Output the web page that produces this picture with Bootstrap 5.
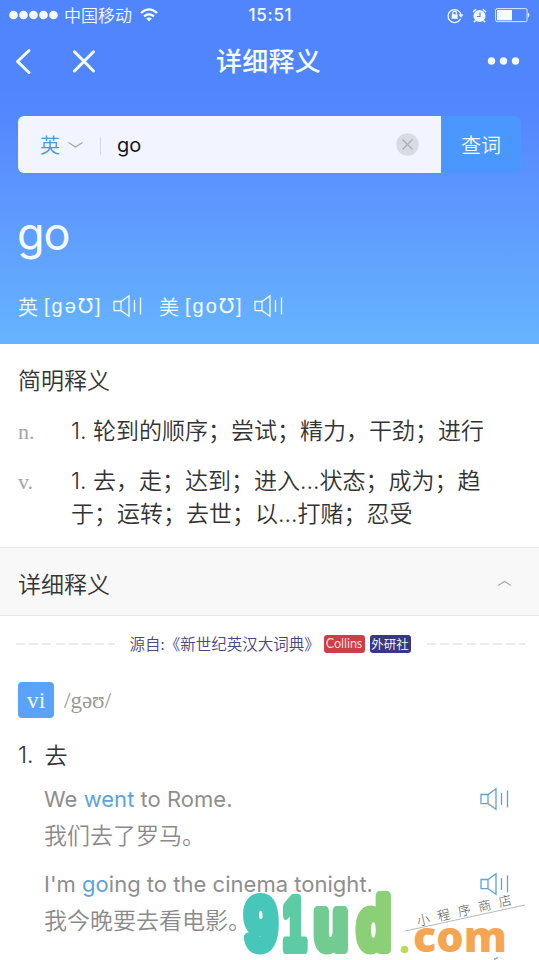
<!DOCTYPE html>
<html lang="zh-CN">
<head>
<meta charset="utf-8">
<meta name="viewport" content="width=device-width, initial-scale=1">
<title>详细释义</title>
<link href="https://cdn.jsdelivr.net/npm/bootstrap@5.3.0/dist/css/bootstrap.min.css" rel="stylesheet">
<style>
html,body{height:960px;overflow:hidden}
body{width:539px;position:relative;background:#fff;color:#333;font-family:Inter,"Noto Sans CJK SC",sans-serif;font-size:23px;line-height:33px;font-weight:350}
svg{display:block;flex:none;overflow:visible}
.cjk{font-family:"Noto Sans CJK SC",sans-serif}
.hero{height:344px;background:linear-gradient(#5185fe 0,#5185fe 90px,#5689ff 130px,#5e99ff 210px,#66b4ff 344px);color:#f5fcff}
.status-row{height:30px;padding:0 9px 0 9px;display:grid;grid-template-columns:1fr auto 1fr;align-items:center;font-size:17px;line-height:28px}
.carrier{margin:0 8px 0 6px}
.clock{font-size:17px;font-weight:500;letter-spacing:.7px;padding-left:2px}
.title-row{height:62px;padding:0 19px 0 15px;display:grid;grid-template-columns:1fr auto 1fr;align-items:center}
.page-title{font-size:26px;font-weight:500;line-height:60px;height:62px;letter-spacing:.3px;padding-left:2px}
.close-x{margin-left:42px}
.search-row{margin:24px 18px 0;height:57px;width:503px;border-radius:6px;background:#4a98ff;overflow:hidden}
.search-field{width:423px;background:#f2f5ff;padding:0 22px}
.lang{font-size:20px;color:#4a98d2;margin-right:8px}
.query{font-size:20px;font-weight:400;color:#15161a;line-height:30px}
.sep{width:1px;height:18px;background:#d5d8e8;margin:2px 16px 0 17px}
.lookup{font-size:20px;line-height:57px}
.headword{font-size:45px;font-weight:400;line-height:60px;margin:31px 0 0 17px;letter-spacing:-1px}
.phon{margin:22px 0 0 18px;height:40px;font-size:20px}
.ipa{font-family:"Liberation Sans","DejaVu Sans",sans-serif;letter-spacing:2px;font-weight:400;margin-left:6px;width:63px;margin-right:6px}
.us{margin-left:17px}
.heading{font-size:23px;line-height:34px}
.brief{height:203px;padding:18px 18px 0}
.sense-n{margin-top:19px}
.sense-v{margin-top:17px}
.pos{width:53px;flex:none;font-family:"Liberation Serif",serif;font-size:22px;color:#a5a5a5}
.detail-bar{height:69px;background:#f8f8f8;border-top:1px solid #eaeaea;border-bottom:1px solid #e7e7e7;padding:3px 28px 0 18px}
.source{height:56px;padding:0 14px 0 16px;font-size:15.5px;color:#484880}
.source-name{margin:0 0 1px 15px;width:194px}
.dash{height:2px;background:repeating-linear-gradient(90deg,#ebebeb 0 9px,transparent 9px 13.2px)}
.tag{height:18px;width:41px;border-radius:3px;color:#fff;font-size:12.5px;line-height:17px;text-align:center}
.collins{background:#cd3f47;font-family:Lato,sans-serif;font-weight:400;color:#ffdcdc}
.fltrp{background:#373784;margin-left:5px}
.vi{width:36px;height:36px;border-radius:4px;background:#5ba2fa;color:#e8fbff;font-family:"Liberation Serif",serif;font-size:24px;line-height:36px;text-align:center}
.ipa2{font-family:"Liberation Serif","DejaVu Serif",serif;color:#999;font-size:23px;margin-left:10px}
.word-row{padding:0 18px;margin-top:10px}
.sense{margin:21px 18px 0;height:33px}
.sense-text{margin-left:11px;padding-top:1px}
.example{padding:0 31px 0 44px;color:#8e8e8e;height:85px}
.first-example{margin-top:9px}
.en{font-size:22px;line-height:36px;font-weight:375;letter-spacing:.02px}
.zh{line-height:34px;font-size:23px;font-weight:350;color:#8a8a8a}
.hit{color:#5ba3dd}
.speak{margin-top:7px}
.watermark{position:absolute;left:225px;top:880px}
</style>
<script src="https://cdn.jsdelivr.net/npm/bootstrap@5.3.0/dist/js/bootstrap.bundle.min.js"></script>
</head>
<body>
<svg width="0" height="0" class="position-absolute"><defs><g id="speaker" fill="none" stroke="currentColor" stroke-width="1.3"><path d="M1 6.5H8L16 .8V21.2L8 15.7H1ZM8 6.5V15.7M21.5 5V17M27.5 2.5V19.5"/></g></defs></svg>
<header class="hero">
 <div class="status-row">
  <div class="d-flex align-items-center">
   <svg width="49" height="10" fill="currentColor"><circle cx="4.5" cy="5" r="4.3"/><circle cx="14.5" cy="5" r="4.3"/><circle cx="24.5" cy="5" r="4.3"/><circle cx="34.5" cy="5" r="4.3"/><circle cx="44.5" cy="5" r="4.3"/></svg>
   <span class="cjk carrier">中国移动</span>
   <svg width="18" height="14" fill="none" stroke="currentColor" stroke-width="2.3"><path d="M1 5Q9-2.2 17 5M4 8.4Q9 4 14 8.4"/><path d="M6.2 10.5Q9 8.3 11.8 10.5L9 13.5Z" fill="currentColor" stroke="none"/></svg>
  </div>
  <span class="clock">15:51</span>
  <div class="d-flex align-items-center justify-content-end">
   <svg width="17" height="15" fill="none" stroke="currentColor" stroke-width="1.3"><path d="M13.5 10.8A6.5 6.5 0 1 1 14 7"/><path d="M11.5 6.5H16.5L14 9.7Z" fill="currentColor" stroke="none"/><rect x="4.6" y="6.3" width="6" height="4.5" fill="currentColor" stroke="none"/><path d="M5.8 6.5V5a1.8 1.8 0 0 1 3.6 0V6.5"/></svg>
   <svg class="ms-2 me-2" width="15" height="15"><circle cx="7.5" cy="8" r="6" fill="currentColor"/><path d="M1 4 4 1.2M14 4 11 1.2M3.5 12.5 2 14.3M11.5 12.5 13 14.3" stroke="currentColor" stroke-width="1.5"/><path d="M8 4.5V8.5H4.8" fill="none" stroke="#5185fe" stroke-width="1.2"/></svg>
   <svg width="35" height="15"><rect x=".6" y=".6" width="31.5" height="13" rx="1.5" fill="none" stroke="currentColor" opacity=".85"/><rect x="2" y="2" width="15" height="10.3" fill="currentColor"/><path d="M33 4.5Q35.8 7 33 9.7Z" fill="currentColor"/></svg>
  </div>
 </div>
 <div class="title-row">
  <div class="d-flex align-items-center">
   <svg width="16" height="25" fill="none" stroke="currentColor" stroke-width="3" stroke-linecap="round" stroke-linejoin="round"><path d="M14 1.5 2.5 12.5 14 23.5"/></svg>
   <svg class="close-x" width="22" height="21" stroke="currentColor" stroke-width="3" stroke-linecap="round"><path d="M1.5.8 20.5 20M20.5.8 1.5 20"/></svg>
  </div>
  <span class="page-title cjk">详细释义</span>
  <svg class="ms-auto" width="33" height="8" fill="currentColor"><circle cx="4.5" cy="4" r="3.7"/><circle cx="16.5" cy="4" r="3.7"/><circle cx="28.5" cy="4" r="3.7"/></svg>
 </div>
 <div class="search-row d-flex">
  <div class="search-field d-flex align-items-center">
   <span class="lang cjk">英</span>
   <svg width="15" height="6" fill="none" stroke="#a0a4bd" stroke-width="1.2"><path d="M.5.5 7.5 5 14.5.5"/></svg>
   <span class="sep"></span><span class="query">go</span>
   <svg class="ms-auto" width="23" height="23"><circle cx="11.5" cy="11.5" r="11.2" fill="#d9dbe2"/><path d="M6.5 6.5 16.5 16.5M16.5 6.5 6.5 16.5" stroke="#aaadb7" stroke-width="1.3"/></svg>
  </div>
  <div class="lookup flex-fill text-center cjk">查词</div>
 </div>
 <div class="headword">go</div>
 <div class="phon d-flex align-items-center">
  <span class="cjk">英</span><span class="ipa">[gə℧]</span>
  <svg width="29" height="22"><use href="#speaker"/></svg>
  <span class="cjk us">美</span><span class="ipa">[go℧]</span>
  <svg width="29" height="22"><use href="#speaker"/></svg>
 </div>
</header>
<main>
 <section class="brief">
  <div class="heading cjk">简明释义</div>
  <div class="d-flex sense-n"><span class="pos">n.</span><span>1. 轮到的顺序；尝试；精力，干劲；进行</span></div>
  <div class="d-flex sense-v"><span class="pos">v.</span><span>1. 去，走；达到；进入...状态；成为；趋<br>于；运转；去世；以...打赌；忍受</span></div>
 </section>
 <div class="detail-bar d-flex align-items-center justify-content-between">
  <span class="heading cjk">详细释义</span>
  <svg width="13" height="5" fill="none" stroke="#aaa" stroke-width="1.2"><path d="M0 4.5 6.5.5 13 4.5"/></svg>
 </div>
 <div class="source d-flex align-items-center">
  <span class="dash flex-fill"></span>
  <span class="cjk source-name text-nowrap">源自:《新世纪英汉大词典》</span>
  <span class="tag collins">Collins</span><span class="tag fltrp cjk">外研社</span>
  <span class="dash flex-fill ms-3"></span>
 </div>
 <div class="word-row d-flex align-items-center"><span class="vi">vi</span><span class="ipa2">/gəʊ/</span></div>
 <div class="sense d-flex"><span>1.</span><span class="sense-text">去</span></div>
 <div class="example first-example d-flex justify-content-between">
  <div><div class="en">We <span class="hit">went</span> to Rome.</div><div class="zh cjk">我们去了罗马。</div></div>
  <svg class="speak hit" width="28" height="22"><use href="#speaker"/></svg>
 </div>
 <div class="example d-flex justify-content-between">
  <div><div class="en">I'm <span class="hit">go</span>ing to the cinema tonight.</div><div class="zh cjk">我今晚要去看电影。</div></div>
  <svg class="speak hit" width="28" height="22"><use href="#speaker"/></svg>
 </div>
</main>
<svg class="watermark" width="314" height="80">
 <g font-family="Liberation Sans" font-weight="700" font-size="73" stroke-width="10" stroke-linejoin="round">
  <text x="20" y="69" textLength="32" lengthAdjust="spacingAndGlyphs" fill="#47c7ba" stroke="#47c7ba">9</text>
  <text x="58" y="69" textLength="23" lengthAdjust="spacingAndGlyphs" fill="#5dcba4" stroke="#5dcba4">1</text>
  <text x="89" y="69" textLength="34" lengthAdjust="spacingAndGlyphs" fill="#72cb91" stroke="#72cb91">u</text>
  <text x="132" y="69" textLength="34" lengthAdjust="spacingAndGlyphs" fill="#8bcf77" stroke="#8bcf77">d</text>
 </g>
 <circle cx="179.5" cy="69.5" r="3.8" fill="#b9dd53"/>
 <text x="188" y="72" font-family="Open Sans" font-weight="800" font-size="43" fill="#f6a552" textLength="94" lengthAdjust="spacingAndGlyphs">com</text>
 <path d="M180 51 300 25" stroke="#999" stroke-width=".7"/>
 <g transform="translate(193 46) rotate(-13)" fill="#555" font-family="Noto Sans CJK SC" font-weight="300" font-size="13"><text textLength="97">小程序商店</text></g>
 <path d="M269 79.5 273 77.5" stroke="#5ba3b8" stroke-width="1.3"/>
</svg>
</body>
</html>
